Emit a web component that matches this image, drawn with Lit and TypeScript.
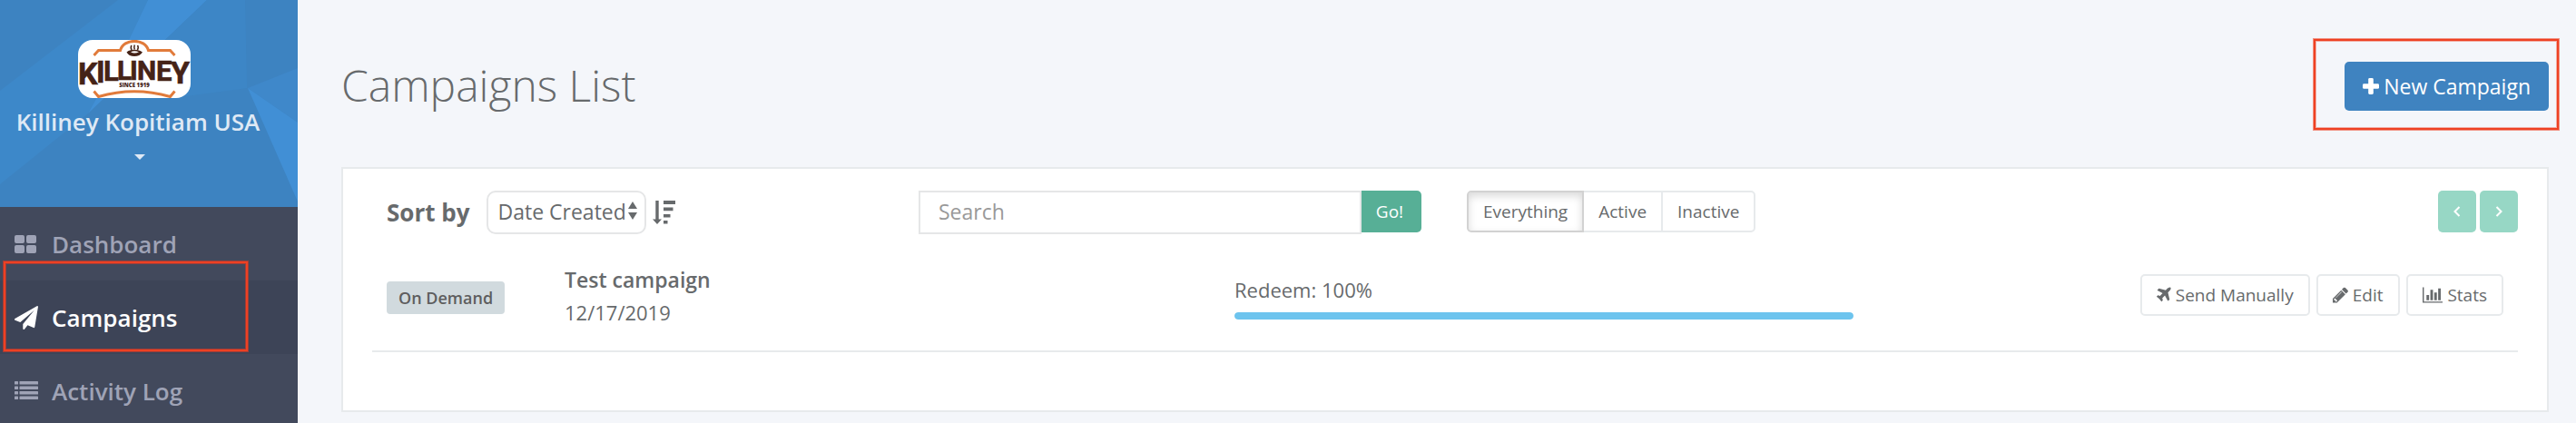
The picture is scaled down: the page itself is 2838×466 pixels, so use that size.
import { LitElement, html, css, svg } from 'lit';
import { customElement, property, state } from 'lit/decorators.js';
import { classMap } from 'lit/directives/class-map.js';

const icons = {
  dashboard: svg`<svg class="menu-icon" viewBox="0 0 28 26" aria-hidden="true">
    <rect x="0" y="3" width="11" height="9" rx="2" /><rect x="13" y="3" width="11" height="9" rx="2" />
    <rect x="0" y="14" width="11" height="9" rx="2" /><rect x="13" y="14" width="11" height="9" rx="2" /></svg>`,
  campaigns: svg`<svg class="menu-icon" viewBox="0 0 28 26" aria-hidden="true">
    <path transform="scale(0.0145)" d="M1764 11q33 24 27 64l-256 1536q-5 29-32 45-14 8-31 8-11 0-24-5l-453-185-242 295q-18 23-49 23-13 0-22-4-19-7-30.5-23.5t-11.5-36.5v-349l864-1059-1069 925-395-162q-37-14-40-55-2-40 32-59l1664-960q15-9 32-9 20 0 36 11z" /></svg>`,
  log: svg`<svg class="menu-icon" viewBox="0 0 28 26" aria-hidden="true">
    ${[2, 7.5, 13, 18.5].map(
      (y) => svg`<rect x="0" y=${y} width="4" height="3.6" rx="0.6" /><rect x="5.5" y=${y} width="20.5" height="3.6" rx="0.6" />`,
    )}</svg>`,
  plus: svg`<svg class="icon-plus" viewBox="0 0 18 18" aria-hidden="true">
    <rect x="6.2" y="0" width="5.6" height="18" rx="1.4" /><rect x="0" y="6.2" width="18" height="5.6" rx="1.4" /></svg>`,
  plane: svg`<svg class="icon" viewBox="192 0 1408 1792" aria-hidden="true"><path d="M1568 160q44 52 12 148t-108 172l-161 161 160 696q5 19-12 33l-128 96q-7 6-19 6-4 0-7-1-15-3-21-16l-279-508-259 259 53 194q5 17-8 31l-96 96q-9 9-23 9h-2q-15-2-24-13l-189-252-252-189q-11-7-13-23-1-13 9-25l96-97q9-9 23-9 6 0 8 1l194 53 259-259-508-279q-14-8-17-24-2-16 9-27l128-128q14-13 30-8l665 159 160-160q76-76 172-108t148 12z" /></svg>`,
  pencil: svg`<svg class="icon" viewBox="128 0 1536 1792" aria-hidden="true"><path d="M491 1536l91-91-235-235-91 91v107h128v128h107zm523-928q0-22-22-22-10 0-17 7l-542 542q-7 7-7 17 0 22 22 22 10 0 17-7l542-542q7-7 7-17zm-54-192l416 416-832 832h-416v-416zm683 96q0 53-37 90l-166 166-416-416 166-165q36-38 90-38 53 0 91 38l235 234q37 39 37 91z" /></svg>`,
  chart: svg`<svg class="icon" viewBox="0 0 2048 1792" aria-hidden="true"><path d="M640 896v512h-256v-512h256zm384-512v1024h-256v-1024h256zm1024 1152v128h-2048v-1536h128v1408h1920zm-640-896v768h-256v-768h256zm384-384v1152h-256v-1152h256z" /></svg>`,
};

@customElement('brand-logo')
class BrandLogo extends LitElement {
  static styles = css`
    :host { display: block; }
    .logo { display: block; width: 124px; height: 64px; border-radius: 16px; background: #fff; overflow: hidden; }
    .word { font-family: Roboto, sans-serif; font-weight: 700; fill: #452317; stroke: #452317; stroke-width: 0.6; }
    .since { font: 800 6px "Open Sans", sans-serif; fill: #452317; }
    .frame { fill: none; stroke: #e17b3b; stroke-width: 3; }
    .cup { fill: #452317; }
    .steam { fill: none; stroke: #452317; stroke-width: 1.5; }
  `;
  render() {
    return html`<svg class="logo" viewBox="0 0 124 64" role="img" aria-label="Killiney">
      <path class="frame" d="M17.500 17 L22.500 11.500 H46.500 C50 -2 74 -2 77.500 11.500 H101.500 L106.500 17" />
      <path class="frame" d="M17.500 56.500 L22.500 62.500 Q62 51 101.500 62.500 L106.500 56.500" />
      <path class="steam" d="M59 6 q-1.500 2 0 5 M62.300 5.500 q-1 2.500 0 5 M65.500 6 q1.500 2 0 5" />
      <path class="cup" fill-rule="evenodd" d="M55.500 12 Q62 9.500 68.500 12 L71 13.500 Q68 18 62 18 Q56 18 53.500 13.500 Z M58 13.200 Q62 16 67 13.200 Q62 11.500 58 13.200 Z" />
      <text class="word">
        <tspan x="0" y="49" font-size="34">K</tspan><tspan x="20" y="47" font-size="33">I</tspan><tspan x="28" y="45" font-size="31">L</tspan><tspan x="43" y="44" font-size="30">L</tspan><tspan x="57" y="44" font-size="30">I</tspan><tspan x="65" y="44" font-size="30">N</tspan><tspan x="86" y="45" font-size="31">E</tspan><tspan x="102" y="48" font-size="34">Y</tspan>
      </text>
      <text class="since" x="62" y="52" text-anchor="middle">SINCE 1919</text>
    </svg>`;
  }
}

@customElement('side-bar')
class SideBar extends LitElement {
  @property() current = 'Campaigns';
  static styles = css`
    :host { display: flex; flex-direction: column; max-height: 100vh; overflow: hidden; background: #42495c; }
    .profile { position: relative; box-sizing: border-box; flex: none; height: 228px; padding: 44px 24px 0 0; background: #3d83c1;
      display: flex; flex-direction: column; align-items: center; color: #dfe9f5; }
    .facets { position: absolute; inset: 0; width: 100%; height: 100%; }
    .logo, .name, .caret { position: relative; }
    .logo { margin-right: 8px; }
    .name { font-size: 26px; font-weight: 600; line-height: 36px; margin-top: 8px; color: inherit; text-decoration: none; white-space: nowrap; }
    .caret { margin: 18px 0 0 4px; border: 6px solid transparent; border-top-color: #dfe9f5; border-bottom: 0; }
    .item { display: flex; align-items: center; gap: 13px; height: 81px; padding-left: 16px; color: #9fa3b6;
      font-size: 26px; font-weight: 600; text-decoration: none; }
    .item.active { background: #3d4457; color: #fff; }
    .menu-icon { width: 28px; height: 26px; fill: currentColor; }
    .marked { position: relative; }
    .mark { position: absolute; box-sizing: border-box; inset: -21px 55px 3px 4px; border: 2px solid #ee4123;
      box-shadow: 0 0 0 1px rgba(180, 60, 50, 0.8), inset 0 0 0 1px rgba(180, 60, 50, 0.8); pointer-events: none; }
  `;
  render() {
    const items = [
      { label: 'Dashboard', icon: icons.dashboard },
      { label: 'Campaigns', icon: icons.campaigns },
      { label: 'Activity Log', icon: icons.log },
    ];
    return html`
      <div class="profile">
        <svg class="facets" viewBox="0 0 328 228" preserveAspectRatio="none" aria-hidden="true">
          <polygon fill="#3d88c9" points="130,0 163,0 143,42 97,125 0,203 0,100" />
          <polygon fill="#418fd5" points="163,0 228,0 97,125 143,42" />
          <polygon fill="#3d86c6" points="228,0 270,0 272,97 190,108 115,108" />
          <polygon fill="#3f88ca" points="273,97 328,75 328,135" />
          <polygon fill="#418fd5" points="273,97 328,135 328,222" />
        </svg>
        <brand-logo class="logo"></brand-logo>
        <a class="name" href="#account">Killiney Kopitiam USA</a>
        <span class="caret"></span>
      </div>
      <nav>
        ${items.map((i) => {
          const active = i.label === this.current;
          return html`<div class=${classMap({ marked: active })}>
            <a class=${classMap({ item: true, active })} href="#">${i.icon}<span>${i.label}</span></a>
            ${active ? html`<div class="mark"></div>` : ''}
          </div>`;
        })}
      </nav>`;
  }
}

@customElement('app-root')
class AppRoot extends LitElement {
  @state() private filter = 'Everything';
  private campaigns = [{ type: 'On Demand', name: 'Test campaign', date: '12/17/2019', redeem: 100 }];

  static styles = css`
    :host { display: grid; grid-template-columns: 328px 1fr; min-height: 100vh; background: #f4f6fa;
      font-family: "Open Sans", "Noto Sans", sans-serif; color: #676a6c; }
    * { box-sizing: border-box; }
    button, input, select { font-family: inherit; margin: 0; }
    main { padding: 68px 30px 12px 48px; }
    .head { display: flex; justify-content: space-between; align-items: flex-start; margin-bottom: 62px; }
    h1 { margin: 0; font-size: 48px; line-height: 52px; font-weight: 300; }
    .marked { position: relative; }
    .mark { position: absolute; inset: -25px -11px -21px -34px; border: 2px solid #ee4123;
      box-shadow: 0 0 0 1px rgba(238, 65, 35, 0.55), inset 0 0 0 1px rgba(238, 65, 35, 0.4); pointer-events: none; }
    .primary { display: flex; align-items: center; gap: 5px; height: 54px; padding: 0 20px; border: 0; border-radius: 5px;
      background: #3f83c0; color: #fff; font-size: 23px; }
    .icon-plus { width: 18px; height: 18px; fill: currentColor; }
    .panel { background: #fff; border: 2px solid #e7eaec; padding: 24px 32px 64px; }
    .toolbar { display: grid; grid-template-columns: 536fr 554fr 1158fr; column-gap: 50px; align-items: start; padding-left: 16px; }
    .sort { display: flex; align-items: center; }
    .sort label { font-size: 26px; font-weight: 700; line-height: 46px; margin-right: 18px; }
    .select { position: relative; }
    select { appearance: none; display: block; width: 176px; height: 48px; padding: 0 0 2px 11px; border: 2px solid #e5e6e7;
      border-radius: 10px; background: #fff; color: inherit; font-size: 23px; }
    .arrows { position: absolute; right: 10px; top: 12px; width: 10px; height: 20px; fill: currentColor; pointer-events: none; }
    .order { display: flex; padding: 0; margin-left: 7px; border: 0; background: none; color: inherit; }
    .order-icon { width: 26px; height: 26px; fill: currentColor; }
    .search { display: flex; align-items: flex-start; }
    input { flex: 1; min-width: 0; height: 48px; padding: 0 20px 2px; border: 2px solid #e5e6e7; border-radius: 0; background: #fff; color: inherit; font-size: 23px; }
    input::placeholder { color: #999; opacity: 1; }
    .go { width: 66px; height: 46px; padding: 0 4px 0 0; border: 0; border-radius: 0 5px 5px 0; background: #57af96; color: #fff; font-size: 19px; }
    .right { display: flex; justify-content: space-between; }
    .group { display: flex; }
    .btn { display: flex; align-items: center; gap: 5px; height: 46px; padding: 0 16px; border: 2px solid #e7eaec;
      border-radius: 5px; background: #fff; color: inherit; font-size: 19px; white-space: nowrap; }
    .group .btn { border-radius: 0; }
    .group .btn + .btn { margin-left: -2px; }
    .group .btn:first-child { border-radius: 5px 0 0 5px; }
    .group .btn:last-child { border-radius: 0 5px 5px 0; }
    .group .btn.on { border-color: #d2d2d2; box-shadow: inset 0 4px 10px rgba(0, 0, 0, 0.15); z-index: 1; }
    .pager { display: flex; gap: 4px; }
    .page { display: flex; align-items: center; justify-content: center; width: 42px; height: 46px; padding: 0; border: 0; border-radius: 5px; background: #97d7c5; color: #fff; }
    .chevron { width: 8px; height: 12px; fill: none; stroke: currentColor; stroke-width: 2; }
    ul { list-style: none; margin: 0; padding: 0; }
    .row { display: grid; grid-template-columns: 196px 738fr 682fr 716fr; align-items: center; padding: 32px 16px 24px; border-bottom: 2px solid #e7eaec; }
    .type { padding-top: 4px; }
    .badge { display: inline-block; padding: 0 13px; border-radius: 4px; background: #d1dade; color: #5e5e5e;
      font-size: 18px; font-weight: 600; line-height: 36px; vertical-align: top; }
    .line { font-size: 22px; line-height: 36px; }
    .title { font-size: 23px; font-weight: 600; line-height: 36px; }
    .track { height: 8px; margin-top: 7px; border-radius: 4px; overflow: hidden; background: #f5f5f5; }
    .bar { height: 100%; border-radius: 4px; background: #6dc4ee; }
    .actions { display: flex; justify-content: flex-end; gap: 7px; padding-bottom: 2px; }
    .icon { height: 20px; fill: currentColor; }
  `;

  render() {
    return html`
      <side-bar></side-bar>
      <main>
        <div class="head">
          <h1>Campaigns List</h1>
          <div class="marked">
            <button class="primary">${icons.plus}<span>New Campaign</span></button>
            <div class="mark"></div>
          </div>
        </div>
        <section class="panel">
          <div class="toolbar">
            <div class="sort">
              <label for="sort">Sort by</label>
              <div class="select">
                <select id="sort"><option>Date Created</option></select>
                <svg class="arrows" viewBox="0 0 10 20" aria-hidden="true"><path d="M5 0L10 8H0zM0 12H10L5 20z" /></svg>
              </div>
              <button class="order" aria-label="Sort descending">
                <svg class="order-icon" viewBox="0 0 26 26" aria-hidden="true">
                  <path d="M3.300 0h3.400v20.500H10L5 26 0 20.500h3.300zM12 0h13v4H12zM12 7.500h10.500v3.700H12zM12 15h7.500v3.600H12zM12 22h4.500v3.600H12z" />
                </svg>
              </button>
            </div>
            <div class="search">
              <input type="text" placeholder="Search" aria-label="Search" />
              <button class="go">Go!</button>
            </div>
            <div class="right">
              <div class="group">
                ${['Everything', 'Active', 'Inactive'].map(
                  (f) => html`<button class=${classMap({ btn: true, on: f === this.filter })} @click=${() => (this.filter = f)}>${f}</button>`,
                )}
              </div>
              <div class="pager">
                <button class="page" aria-label="Previous"><svg class="chevron" viewBox="0 0 8 12"><path d="M6.500 1L1.500 6l5 5" /></svg></button>
                <button class="page" aria-label="Next"><svg class="chevron" viewBox="0 0 8 12"><path d="M1.500 1l5 5-5 5" /></svg></button>
              </div>
            </div>
          </div>
          <ul>
            ${this.campaigns.map(
              (c) => html`<li class="row">
                <div class="type"><span class="badge">${c.type}</span></div>
                <div><div class="title">${c.name}</div><div class="line">${c.date}</div></div>
                <div>
                  <div class="line">Redeem: ${c.redeem}%</div>
                  <div class="track"><div class="bar" style="width:${c.redeem}%"></div></div>
                </div>
                <div class="actions">
                  <button class="btn">${icons.plane}<span>Send Manually</span></button>
                  <button class="btn">${icons.pencil}<span>Edit</span></button>
                  <button class="btn">${icons.chart}<span>Stats</span></button>
                </div>
              </li>`,
            )}
          </ul>
        </section>
      </main>`;
  }
}
